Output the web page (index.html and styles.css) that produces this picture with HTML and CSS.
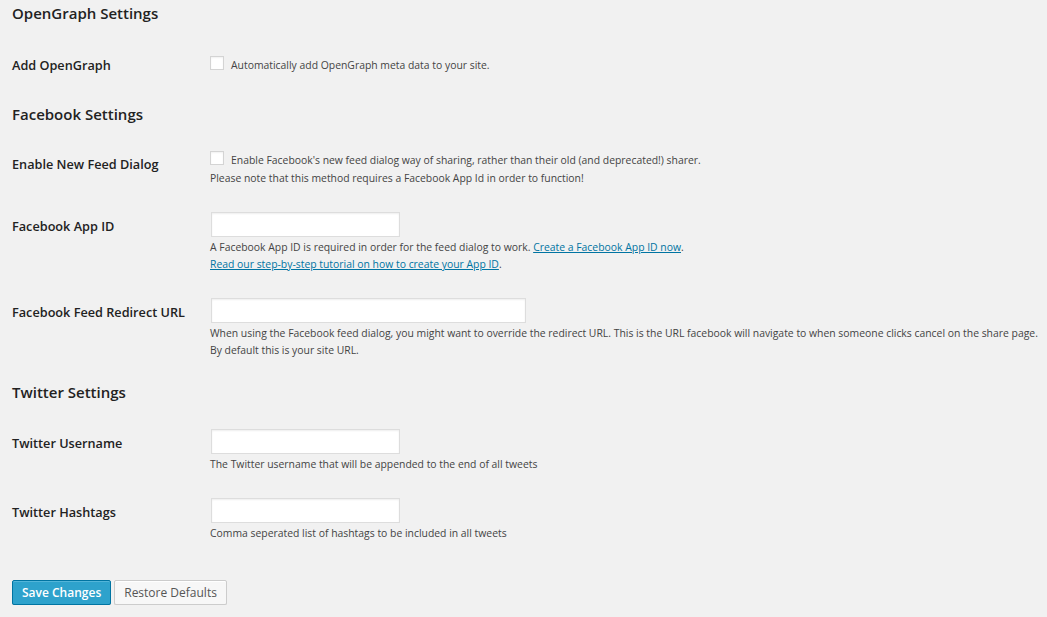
FILE: index.html
```html
<!DOCTYPE html>
<html lang="en">
<head>
  <meta charset="UTF-8">
  <meta name="viewport" content="width=device-width, initial-scale=1.0">
  <title>Social Settings</title>
  <link rel="stylesheet" href="styles.css">
</head>
<body>
  <form class="wrap" onsubmit="return false;">
    <h3 class="section-title">OpenGraph Settings</h3>
    <div class="field-row check-row">
      <label class="field-label" for="og_enable">Add OpenGraph</label>
      <div class="field">
        <div class="check-line">
          <input type="checkbox" id="og_enable" class="check">
          <span>Automatically add OpenGraph meta data to your site.</span>
        </div>
      </div>
    </div>

    <h3 class="section-title">Facebook Settings</h3>
    <div class="field-row check-row">
      <label class="field-label" for="fb_dialog">Enable New Feed Dialog</label>
      <div class="field">
        <div class="check-line">
          <input type="checkbox" id="fb_dialog" class="check">
          <span>Enable Facebook's new feed dialog way of sharing, rather than their old (and deprecated!) sharer.</span>
        </div>
        <p class="note">Please note that this method requires a Facebook App Id in order to function!</p>
      </div>
    </div>
    <div class="field-row">
      <label class="field-label" for="fb_app">Facebook App ID</label>
      <div class="field">
        <input type="text" id="fb_app" class="text-input">
        <p class="description">A Facebook App ID is required in order for the feed dialog to work. <a href="#">Create a Facebook App ID now</a>.<br>
          <a href="#">Read our step-by-step tutorial on how to create your App ID</a>.</p>
      </div>
    </div>
    <div class="field-row">
      <label class="field-label" for="fb_redirect">Facebook Feed Redirect URL</label>
      <div class="field">
        <input type="text" id="fb_redirect" class="text-input wide">
        <p class="description nowrap">When using the Facebook feed dialog, you might want to override the redirect URL. This is the URL facebook will navigate to when someone clicks cancel on the share page.<br>
          By default this is your site URL.</p>
      </div>
    </div>

    <h3 class="section-title">Twitter Settings</h3>
    <div class="field-row">
      <label class="field-label" for="tw_user">Twitter Username</label>
      <div class="field">
        <input type="text" id="tw_user" class="text-input">
        <p class="description">The Twitter username that will be appended to the end of all tweets</p>
      </div>
    </div>
    <div class="field-row">
      <label class="field-label" for="tw_tags">Twitter Hashtags</label>
      <div class="field">
        <input type="text" id="tw_tags" class="text-input">
        <p class="description">Comma seperated list of hashtags to be included in all tweets</p>
      </div>
    </div>

    <div class="submit">
      <button type="submit" class="button button-primary">Save Changes</button>
      <button type="button" class="button">Restore Defaults</button>
    </div>
  </form>
</body>
</html>
```

FILE: styles.css
```css
body { margin: 0; background: #f1f1f1; color: #444; font-family: 'Open Sans', 'Liberation Sans', sans-serif; }
.wrap { padding: 3px 0 0 12px; }

.section-title { margin: 23px 0 27px; font-size: 15px; line-height: 20px; font-weight: 600; color: #222; }
.section-title:first-child { margin-top: 0; margin-bottom: 33px; }

.field-row { display: grid; grid-template-columns: 198px 1fr; margin-top: 25px; }
.section-title + .field-row { margin-top: 0; }
.check-row { min-height: 25px; }

.field-label { padding-top: 5px; font-size: 12.7px; line-height: 18px; font-weight: 600; color: #222; }
.check-row .field-label { padding-top: 4px; }
.check-row:nth-of-type(1) .field-label { padding-top: 0; }

.check-line { display: flex; align-items: flex-start; gap: 7px; font-size: 10.4px; line-height: 18px; }
.check { margin: 0; width: 14px; height: 14px; appearance: none; background: #fff; border: 1px solid #d4d4d4; box-shadow: inset 0 1px 2px rgba(0,0,0,0.06); }
.note { margin: 0; font-size: 10.4px; line-height: 18px; }

.text-input { display: block; box-sizing: border-box; margin: 0 0 0 1px; width: 189px; height: 25px; padding: 2px 5px; background: #fff; border: 1px solid #ddd; box-shadow: inset 0 1px 2px rgba(0,0,0,0.07); font: inherit; }
.text-input.wide { width: 315px; }
.description { margin: 2px 0 0; font-size: 10.4px; line-height: 17px; }
.description.nowrap { white-space: nowrap; }
.description a { color: #0074a2; }

.submit { display: flex; gap: 3px; margin-top: 38px; }
.button { height: 25px; padding: 0 9px; font-family: inherit; font-size: 12px; border-radius: 2px; border: 1px solid #ccc; background: #f7f7f7; color: #555; box-shadow: inset 0 1px 0 #fff, 0 1px 0 rgba(0,0,0,0.08); }
.button-primary { background: #2ea2cc; border-color: #0074a2; color: #fff; font-weight: 600; box-shadow: inset 0 1px 0 rgba(120,200,230,0.5), 0 1px 0 rgba(0,0,0,0.15); }
```
